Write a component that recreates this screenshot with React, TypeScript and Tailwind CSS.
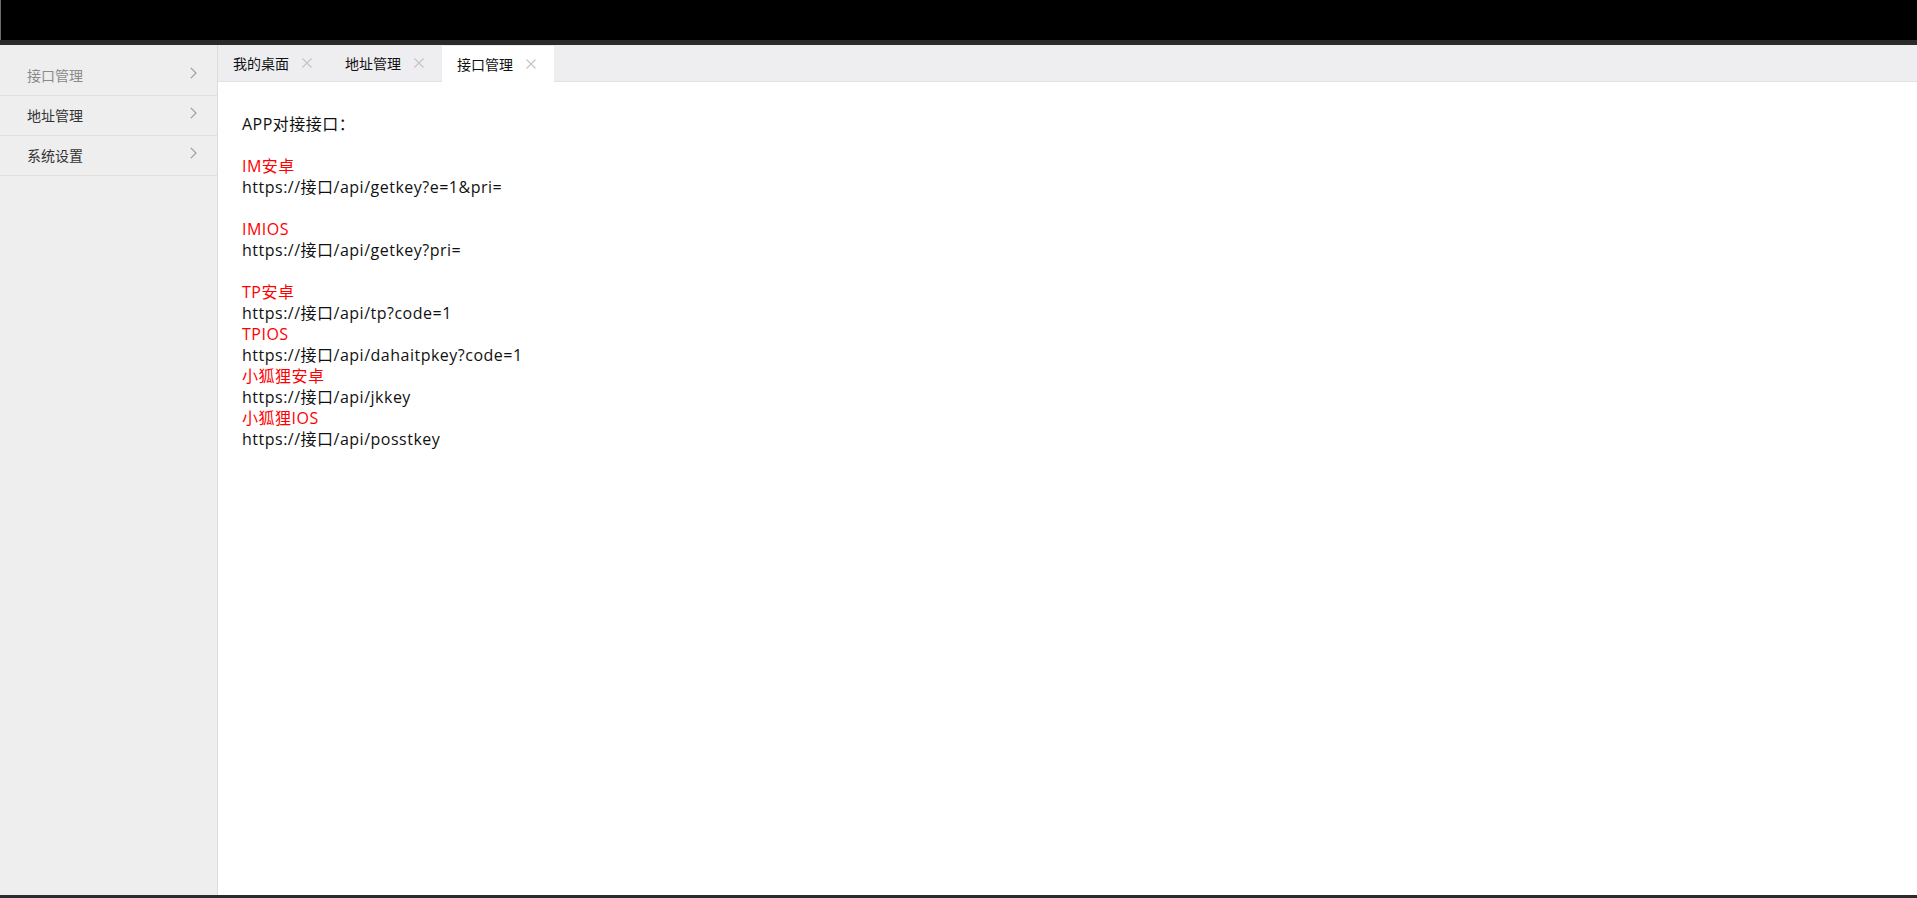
import React from 'react';

const Chevron = () => (
  <svg width="7" height="12" viewBox="0 0 7 12" fill="none" stroke="#9a9a9a" strokeWidth="1.1">
    <path d="M0.8 0.8 6 6l-5.2 5.2" />
  </svg>
);

const CloseX = () => (
  <svg width="10" height="10" viewBox="0 0 10 10" fill="none" stroke="#c4c4c4" strokeWidth="1.2">
    <path d="M0.5 0.5l9 9M9.5 0.5l-9 9" />
  </svg>
);

const menus = [
  { label: '接口管理', muted: true },
  { label: '地址管理', muted: false },
  { label: '系统设置', muted: false },
];

const tabs = [
  { label: '我的桌面', active: false },
  { label: '地址管理', active: false },
  { label: '接口管理', active: true },
];

const lines: { text: string; red?: boolean }[] = [
  { text: 'APP对接接口：' },
  { text: '' },
  { text: 'IM安卓', red: true },
  { text: 'https://接口/api/getkey?e=1&pri=' },
  { text: '' },
  { text: 'IMIOS', red: true },
  { text: 'https://接口/api/getkey?pri=' },
  { text: '' },
  { text: 'TP安卓', red: true },
  { text: 'https://接口/api/tp?code=1' },
  { text: 'TPIOS', red: true },
  { text: 'https://接口/api/dahaitpkey?code=1' },
  { text: '小狐狸安卓', red: true },
  { text: 'https://接口/api/jkkey' },
  { text: '小狐狸IOS', red: true },
  { text: 'https://接口/api/posstkey' },
];

const font = '"Open Sans", "Noto Sans CJK SC", sans-serif';

export default function App() {
  return (
    <div className="flex h-screen flex-col bg-[#2b2b2b]" style={{ fontFamily: font }}>
      <div className="h-[40px] shrink-0 border-l border-[#6a6a6a] bg-black" />
      <div className="h-[5px] shrink-0 bg-[#2b2b2b]" />

      <div className="flex min-h-0 flex-1">
        <div className="w-[218px] shrink-0 border-r border-[#dcdcdc] bg-[#eeeeee] pt-[11px]">
          {menus.map((m) => (
            <div
              key={m.label}
              className="flex h-[40px] items-center justify-between border-b border-[#e0e0e0] pl-[27px] pr-[20px]"
            >
              <span className={`text-[14px] ${m.muted ? 'text-[#8a8a8a]' : 'text-[#333333]'}`}>{m.label}</span>
              <span className="-mt-[5px]">
                <Chevron />
              </span>
            </div>
          ))}
        </div>

        <div className="flex min-w-0 flex-1 flex-col bg-white">
          <div className="flex h-[37px] shrink-0 items-end border-b border-[#e2e2e2] bg-[#eeeef0]">
            {tabs.map((t) => (
              <div
                key={t.label}
                className={`flex w-[112px] items-center pl-[15px] ${
                  t.active ? '-mb-px h-[36px] bg-white' : 'h-[36px]'
                }`}
              >
                <span className="text-[14px] text-[#111111]">{t.label}</span>
                <span className="ml-[13px] flex">
                  <CloseX />
                </span>
              </div>
            ))}
          </div>

          <div className="flex-1 pl-[24px] pt-[32px] text-[16px] leading-[21px] tracking-[0.5px]">
            {lines.map((l, i) => (
              <div key={i} className={`h-[21px] ${l.red ? 'text-[#ff0000]' : 'text-[#111111]'}`}>
                {l.text}
              </div>
            ))}
          </div>
        </div>
      </div>

      <div className="h-[3px] shrink-0 bg-[#2b2b2b]" />
    </div>
  );
}
